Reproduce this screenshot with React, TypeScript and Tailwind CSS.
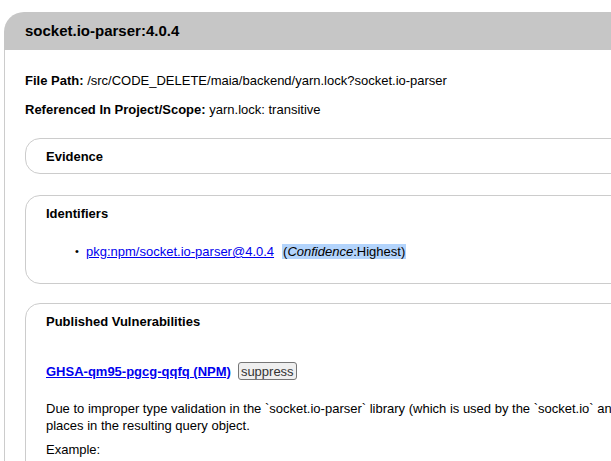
import React from "react";

export default function App() {
  return (
    <div className="relative w-[611px] h-[461px] overflow-hidden bg-white text-black text-[13px] leading-[15px]" style={{ fontFamily: '"Liberation Sans", Arial, sans-serif' }}>
      <div className="ml-[4px] mt-[12px] w-[1400px]">
        <div className="h-[38px] rounded-tl-[20px] bg-[#c6c6c6] pl-[21px] flex items-center text-[15px] font-bold leading-[18px]">
          socket.io-parser:4.0.4
        </div>
        <div className="border-l border-[#cccccc] pl-[20px] pt-[23px] pb-[40px]">
          <div>
            <b>File Path:</b> /src/CODE_DELETE/maia/backend/yarn.lock?socket.io-parser
          </div>
          <div className="mt-[14px]">
            <b>Referenced In Project/Scope:</b> yarn.lock: transitive
          </div>

          <div className="mt-[21px] border border-[#cccccc] rounded-[15px] pl-[20px] pt-[10px] pb-[9px]">
            <div className="font-bold">Evidence</div>
          </div>

          <div className="mt-[21px] border border-[#cccccc] rounded-[15px] pl-[20px] pt-[10px] pb-[24px]">
            <div className="font-bold">Identifiers</div>
            <ul className="mt-[23px] pl-[40px]">
              <li className="flex items-center">
                <span className="absolute -ml-[11px] mt-[-1px] text-[11px]">•</span>
                <a className="text-[#0000ee] underline">pkg:npm/socket.io-parser@4.0.4</a>
                <span className="ml-[8px] bg-[#b3d4fc] px-[1px]">(<i>Confidence</i>:Highest)</span>
              </li>
            </ul>
          </div>

          <div className="mt-[19px] border border-[#cccccc] rounded-[15px] pl-[20px] pt-[10px] pb-[20px]">
            <div className="font-bold">Published Vulnerabilities</div>
            <div className="mt-[33px] flex items-center h-[18px]">
              <a className="text-[#0000ee] underline font-bold">GHSA-qm95-pgcg-qqfq (NPM)</a>
              <button className="ml-[7px] border border-[#767676] rounded-[3px] bg-[#efefef] text-[#333] px-[2px] h-[18px] leading-[15px] text-[13px]">suppress</button>
            </div>
            <p className="mt-[20px] whitespace-nowrap leading-[17px]">
              Due to improper type validation in the `socket.io-parser` library (which is used by the `socket.io` and `socket.io-client` packages to encode and decode Socket.IO packets), it is possible to overwrite the _placeholder object which allows an attacker to place references to functions at arbitrary
              <br />
              places in the resulting query object.
            </p>
            <p className="mt-[7px] leading-[17px]">Example:</p>
          </div>
        </div>
      </div>
    </div>
  );
}
